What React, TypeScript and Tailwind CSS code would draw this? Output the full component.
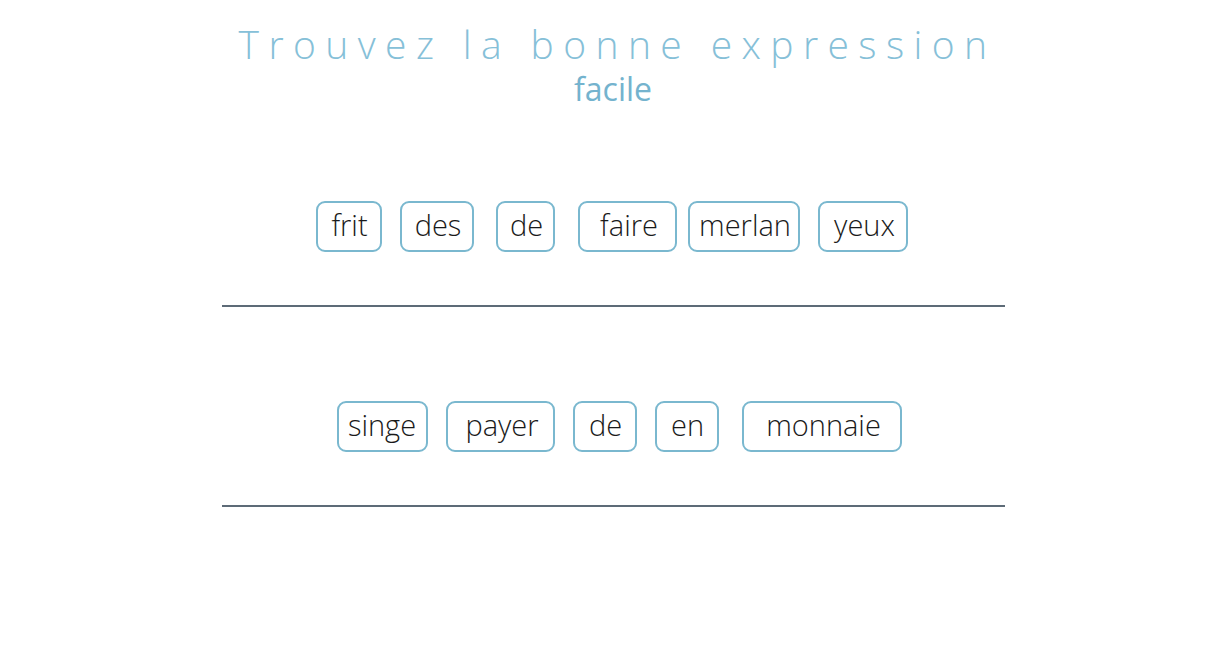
import React from 'react';

type Word = { text: string; w: string; ml: string; pl: string };

const row1: Word[] = [
  { text: 'frit', w: 'w-[66px]', ml: 'ml-0', pl: 'pl-[2px]' },
  { text: 'des', w: 'w-[74px]', ml: 'ml-[18px]', pl: 'pl-[3px]' },
  { text: 'de', w: 'w-[59px]', ml: 'ml-[22px]', pl: 'pl-[3px]' },
  { text: 'faire', w: 'w-[99px]', ml: 'ml-[23px]', pl: 'pl-[4px]' },
  { text: 'merlan', w: 'w-[112px]', ml: 'ml-[11px]', pl: 'pl-[3px]' },
  { text: 'yeux', w: 'w-[90px]', ml: 'ml-[18px]', pl: 'pl-[4px]' },
];

const row2: Word[] = [
  { text: 'singe', w: 'w-[91px]', ml: 'ml-0', pl: 'pl-0' },
  { text: 'payer', w: 'w-[109px]', ml: 'ml-[18px]', pl: 'pl-[4px]' },
  { text: 'de', w: 'w-[64px]', ml: 'ml-[18px]', pl: 'pl-[2px]' },
  { text: 'en', w: 'w-[64px]', ml: 'ml-[18px]', pl: 'pl-[2px]' },
  { text: 'monnaie', w: 'w-[160px]', ml: 'ml-[23px]', pl: 'pl-[4px]' },
];

const WordBox = ({ word }: { word: Word }) => (
  <div
    className={`${word.w} ${word.ml} ${word.pl} h-[51px] pb-[5px] flex items-center justify-center rounded-[9px] border-2 border-[#7ab8cf] text-[29px] font-light text-[#1a1a1a] leading-none`}
  >
    {word.text}
  </div>
);

const App: React.FC = () => {
  return (
    <div className="w-[1226px] h-[648px] bg-white overflow-hidden" style={{ fontFamily: '"Open Sans", "Liberation Sans", sans-serif' }}>
      <div className="flex flex-col items-center pt-[22px]">
        <h1 className="text-[39px] font-light leading-[44px] tracking-[9.4px] pl-[9px] text-[#86c0d8]">
          Trouvez la bonne expression
        </h1>
        <h2 className="mt-[3px] text-[32px] leading-[40px] text-[#74b3ce]">facile</h2>
      </div>

      <div className="flex flex-col items-center">
        <div className="flex justify-center mt-[92px] pr-[3px]">
          {row1.map(w => <WordBox key={w.text} word={w} />)}
        </div>
        <div className="w-[783px] h-[2px] bg-[#5d6b77] mt-[53px]" />
        <div className="flex justify-center mt-[94px] pl-[12px]">
          {row2.map(w => <WordBox key={w.text + w.w} word={w} />)}
        </div>
        <div className="w-[783px] h-[2px] bg-[#5d6b77] mt-[53px]" />
      </div>
    </div>
  );
};

export default App;
